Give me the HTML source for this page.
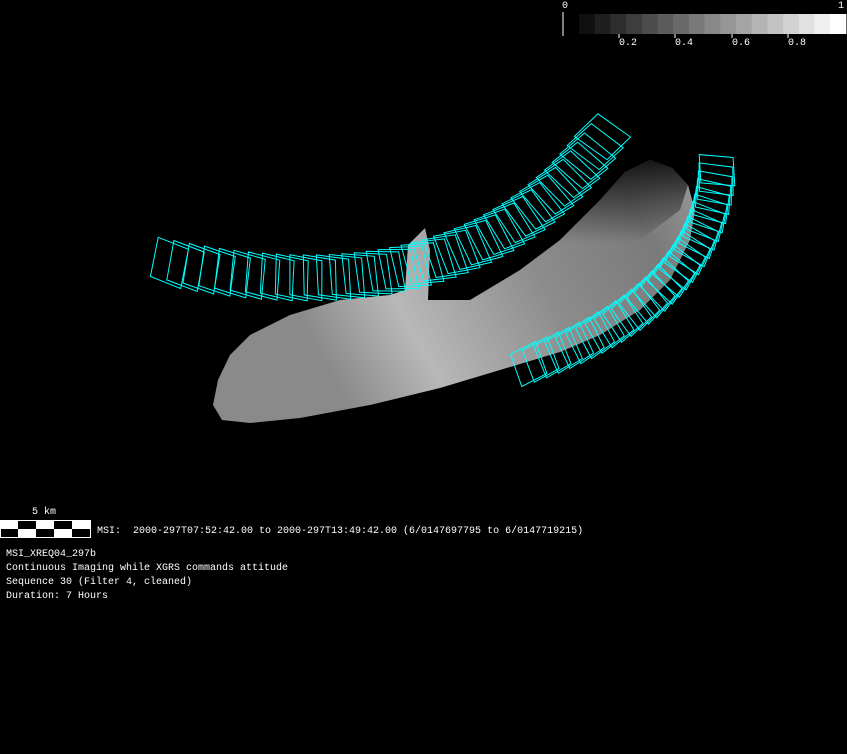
<!DOCTYPE html>
<html><head><style>
html,body{margin:0;padding:0;background:#000;width:847px;height:754px;overflow:hidden}
.t{position:absolute;font-family:"Liberation Mono",monospace;font-size:10px;color:#fff;white-space:pre;line-height:14px}
</style></head><body>
<svg width="847" height="754" style="position:absolute;left:0;top:0">
<defs>
<linearGradient id="g" x1="0" y1="0" x2="1" y2="-0.3">
<stop offset="0" stop-color="#8a8a8a"/>
<stop offset="0.2" stop-color="#b8b8b8"/>
<stop offset="0.5" stop-color="#8c8c8c"/>
<stop offset="0.75" stop-color="#7a7a7a"/>
<stop offset="1" stop-color="#aaa"/>
</linearGradient>
<linearGradient id="g2" x1="0" y1="0" x2="0" y2="1">
<stop offset="0" stop-color="#000" stop-opacity="0.85"/>
<stop offset="0.5" stop-color="#000" stop-opacity="0"/>
</linearGradient>
</defs>
<path d="M213,405 L218,380 L230,355 L250,335 L290,315 L340,300 L390,295 L405,290 L408,245 L418,235 L425,228 L430,250 L428,300 L470,300 L520,270 L560,240 L600,200 L625,172 L650,160 L672,168 L688,185 L695,210 L690,240 L670,280 L640,310 L600,335 L560,352 L500,370 L440,388 L370,405 L300,418 L250,423 L222,420 Z" fill="url(#g)"/>
<path d="M390,295 L408,290 L428,300 L470,300 L520,270 L560,240 L600,200 L625,172 L650,160 L672,168 L688,185 L680,210 L640,240 L590,275 L540,305 L480,325 L420,318 L380,305 Z" fill="url(#g2)"/>
<g id="q" fill="none" stroke="#00ffff" stroke-width="1"></g>
<g id="cb"></g>
<line x1="563" y1="12" x2="563" y2="36" stroke="#fff"/>
<g stroke="#fff"><line x1="619" y1="34" x2="619" y2="38"/><line x1="675" y1="34" x2="675" y2="38"/><line x1="732" y1="34" x2="732" y2="38"/><line x1="788" y1="34" x2="788" y2="38"/></g>
<rect x="0" y="520" width="91" height="18" fill="#fff"/>
<g fill="#000"><rect x="18" y="521" width="18" height="8"/><rect x="54" y="521" width="18" height="8"/><rect x="1" y="529" width="17" height="8"/><rect x="36" y="529" width="18" height="8"/><rect x="72" y="529" width="18" height="8"/></g>
</svg>
<div class="t" style="left:562px;top:0px">0</div>
<div class="t" style="left:838px;top:0px">1</div>
<div class="t" style="left:619px;top:37px">0.2</div>
<div class="t" style="left:675px;top:37px">0.4</div>
<div class="t" style="left:732px;top:37px">0.6</div>
<div class="t" style="left:788px;top:37px">0.8</div>
<div class="t" style="left:32px;top:506px">5 km</div>
<div class="t" style="left:97px;top:525px">MSI:  2000-297T07:52:42.00 to 2000-297T13:49:42.00 (6/0147697795 to 6/0147719215)</div>
<div class="t" style="left:6px;top:548px">MSI_XREQ04_297b
Continuous Imaging while XGRS commands attitude
Sequence 30 (Filter 4, cleaned)
Duration: 7 Hours</div>
<script>
var ns="http://www.w3.org/2000/svg";
var cb=document.getElementById("cb");
for(var i=0;i<17;i++){var r=document.createElementNS(ns,"rect");var x=579+i*15.7;r.setAttribute("x",x);r.setAttribute("y",14);r.setAttribute("width",16.2);r.setAttribute("height",20);var v=Math.round(16+i*239/16);r.setAttribute("fill","rgb("+v+","+v+","+v+")");cb.appendChild(r);}
var q=document.getElementById("q");
function bez(p0,p1,p2,t){var a=(1-t)*(1-t),b=2*(1-t)*t,c=t*t;return[a*p0[0]+b*p1[0]+c*p2[0],a*p0[1]+b*p1[1]+c*p2[1]];}
function arc(p0,p1,p2,n,w,h,sk){for(var i=0;i<n;i++){var t=i/(n-1);var p=bez(p0,p1,p2,t),p2b=bez(p0,p1,p2,Math.min(1,t+0.01)),pa=bez(p0,p1,p2,Math.max(0,t-0.01));var dx=p2b[0]-pa[0],dy=p2b[1]-pa[1],L=Math.hypot(dx,dy);dx/=L;dy/=L;var nx=-dy,ny=dx;var pts=[];var cs=[[-w,-h],[w,-h+sk],[w,h+sk],[-w,h]];for(var k=0;k<4;k++){var u=cs[k][0],v=cs[k][1];pts.push((p[0]+dx*u+nx*v).toFixed(1)+","+(p[1]+dy*u+ny*v).toFixed(1));}var pg=document.createElementNS(ns,"polygon");pg.setAttribute("points",pts.join(" "));q.appendChild(pg);}}
arc([170,260],[470,320],[600,135],38,16,20,6);
arc([715,170],[705,300],[528,362],30,14,17,-4);
</script>
</body></html>
